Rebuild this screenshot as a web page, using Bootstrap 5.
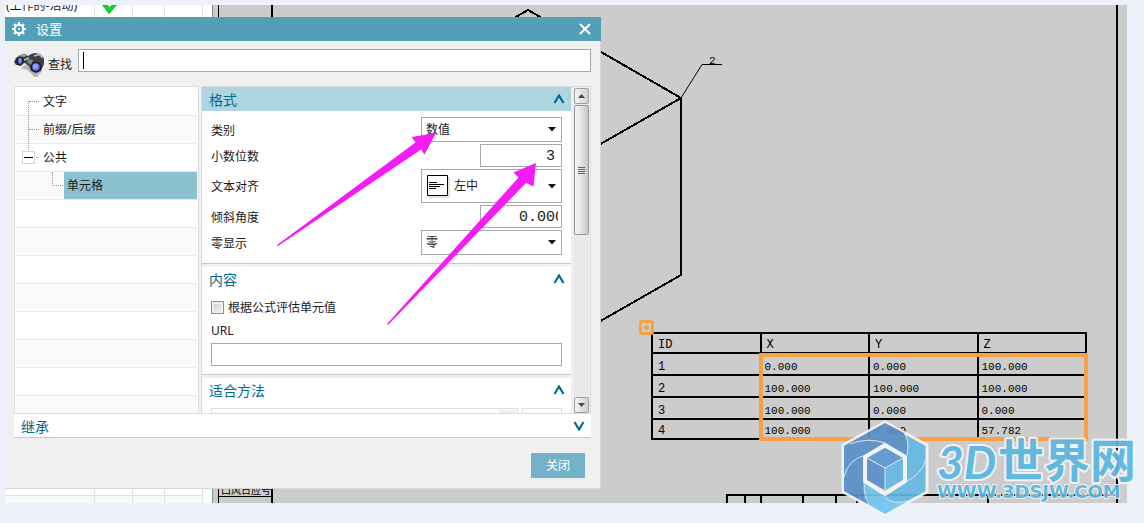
<!DOCTYPE html>
<html lang="zh-CN">
<head>
<meta charset="utf-8">
<meta name="viewport" content="width=device-width, initial-scale=1">
<title>设置</title>
<link href="https://cdn.jsdelivr.net/npm/bootstrap@5.3.0/dist/css/bootstrap.min.css" rel="stylesheet">
<style>
  body { background: #edf1fa; font: 12px/20px "Noto Sans", "Noto Sans CJK SC", sans-serif; color: #1a1a1a; }
  .workspace { height: 100vh; padding: 5px 17px 20px 5px; }
  .desk { background: #ccc; }

  /* part navigator behind the dialog */
  .navigator { width: 208px; background: #fff; border-right: 1px solid #868a8e; }
  .nav-grid { display: grid; grid-template-columns: 90px 38px 32px 38px; width: 198px; height: 8px; background: #f9f9f9; border-top: 1px solid #e6e6e6; }
  .nav-grid.top-row { height: 12px; background: #fff; border-top: 0; }
  .nav-grid > div { border-right: 1px solid #e0e0e0; overflow: hidden; white-space: nowrap; }
  .nav-grid.plain { background: #fff; border-top: 0; height: 7px; }
  .nav-grid svg { display: block; }
  .row-name { line-height: 20px; margin-top: -9px; padding-left: 1px; }

  /* drawing sheet */
  .sheet { min-width: 0; overflow: hidden; }
  .sheet svg { display: block; }
  .point-table { position: absolute; left: 438px; top: 327px; width: 436px; border-collapse: collapse; table-layout: fixed; font: 11px/12px "Liberation Mono", monospace; color: #000; }
  .point-table th, .point-table td { border: 2px solid #000; padding: 5px 0 0 5px; height: 22px; font-weight: 400; }
  .point-table td { padding-left: 3px; }
  .point-table th { font-size: 12px; }
  .point-table tr:last-child > * { height: 20px; padding-top: 3px; }
  .picked { position: absolute; left: 546px; top: 348px; width: 329px; height: 88px; border: 4px solid #f9a044; }
  .grip { position: absolute; left: 426px; top: 315px; width: 15px; height: 15px; border: 3px solid #f9a044; border-radius: 3px; }
  .grip::after { content: ""; position: absolute; left: 2px; top: 2px; width: 5px; height: 5px; border-radius: 2px; background: #f9a044; }

  /* dialog */
  .dialog-box { position: absolute; left: 5px; top: 17px; width: 596px; background: #f0f0f0; border: solid #d6d6d6; border-width: 0 1px 1px 0; }
  .dialog-box label { line-height: 18px; padding-top: 2px; }
  .title-bar { height: 24px; margin-right: -1px; padding: 0 10px 0 7px; gap: 10px; background: #549fb8; color: #fff; font-size: 13px; }
  .title-bar button, .fold { padding: 0; border: 0; background: none; line-height: 0; }
  .dialog-main { padding: 8px 9px 10px; }
  .search-row { height: 23px; margin-bottom: 14px; }
  .search-row label { width: 30px; margin-top: 5px; }
  .field { border: 1px solid #a9a9a9; border-radius: 0; background-color: #fff; height: 23px; padding: 0 4px; font: inherit; color: #1a1a1a; outline: 0; }
  .find-box { background: #fff linear-gradient(#000, #000) no-repeat 4px 2px / 1px 17px; caret-color: transparent; padding-left: 6px; }
  .num { width: 82px; font: 15px/20px "Liberation Mono", monospace; text-align: right; padding: 2px 6px 0 4px; }
  .num.angle { text-align: left; padding: 2px 3px 0 38px; }
  .pick { width: 141px; height: 25px; appearance: none; background: #fff url("data:image/svg+xml,%3Csvg xmlns='http://www.w3.org/2000/svg' width='8' height='5'%3E%3Cpath d='M0 0h8L4 4.5z' fill='%23111'/%3E%3C/svg%3E") no-repeat right 5px center; }
  .pick.tall { height: 34px; padding-left: 32px; }
  .pick-icon { left: 5px; top: 5px; }
  .panes { height: 328px; gap: 2px; }
  .tree { width: 185px; background: #fff; border: 1px solid #dcdcdc; padding: 1px; overflow: hidden; }
  .tree li { height: 28px; border-bottom: 1px solid #eaeaea; display: flex; align-items: center; padding-left: 27px; position: relative; }
  .tree li:nth-child(even) { background: #fafafa; }
  .tree .chosen { margin-left: 21px; padding-left: 3px; flex: 1; align-self: stretch; background: #8bc1d0; display: flex; align-items: center; }
  .twig { position: absolute; z-index: 1; border: 0 dotted #999; }
  .twig.h { left: 13px; top: 13px; width: 10px; border-top-width: 1px; }
  .twig.v { left: 12px; top: 13px; height: 49px; border-left-width: 1px; }
  .twig.sub { left: 36px; top: 0; width: 11px; height: 14px; border-width: 0 0 1px 1px; }
  .knob { position: absolute; z-index: 1; left: 6px; top: 7px; width: 13px; height: 13px; border: 1px solid #d4d4d4; background: #fff; }
  .knob::after { content: ""; position: absolute; left: 1px; top: 5px; width: 9px; height: 1px; background: #000; }
  .options { border: 1px solid #dcdcdc; min-width: 0; overflow: hidden; }
  .sections { overflow: hidden; min-width: 0; }
  .group { background: #fff; border-bottom: 1px solid #c9c9c9; margin-bottom: 3px; }
  .group-head { height: 24px; padding: 0 6px 0 7px; font-size: 14px; line-height: 24px; color: #046a8c; margin: 0; font-weight: 400; }
  .group-head span { line-height: 22px; padding-top: 2px; }
  .group-head.on { background: #afd6e0; }
  .group-body { padding: 6px 9px 8px; }
  .faded { border-color: #dcdcdc; }
  .tick { appearance: none; width: 13px; height: 13px; margin: 0; border: 1px solid #8e8f8f; background: linear-gradient(135deg, #c4c9cf, #f6f6f6); box-shadow: inset 0 0 0 2px #f0f0f0; }
  .bar { width: 15px; margin: 1px 1px 0 3px; background: #e9e9e9; }
  .bar-end { height: 16px; border: 1px solid #a0a0a0; border-radius: 2px; background: linear-gradient(90deg, #f4f4f4, #d0d0d0); padding: 0; line-height: 0; }
  .bar-end svg { display: block; margin: auto; }
  .thumb { height: 130px; margin-top: 1px; border: 1px solid #989898; border-radius: 2px; background: linear-gradient(90deg, #f4f4f4, #e4e4e4 50%, #c4c4c4); }
  .inherit { background: #fff; border-bottom: 1px solid #c9c9c9; }
  .close-btn { width: 54px; height: 25px; margin: 15px 6px 0 0; padding: 0; border: 0; border-radius: 0; background: #73b2c8; color: #fff; font-size: 12px; }
  .arrows { position: absolute; left: 0; top: 0; pointer-events: none; }
  .watermark { position: absolute; right: 0; bottom: 0; pointer-events: none; }
</style>
</head>
<body>
<main class="workspace position-relative overflow-hidden">
  <div class="desk d-flex h-100 overflow-hidden">
    <section class="navigator flex-shrink-0 d-flex flex-column justify-content-between">
      <div class="nav-grid top-row">
        <div class="row-name">(工作的-活动)</div>
        <div><svg width="37" height="12"><path d="M7.500 0h5l2 2.500L17 0h4.500L14 8.800z" fill="#12d422" stroke="#0d9a2c" stroke-width=".6"/></svg></div><div></div><div></div>
      </div>
      <div>
        <div class="nav-grid plain"><div></div><div></div><div></div><div></div></div>
        <div class="nav-grid"><div></div><div></div><div></div><div></div></div>
      </div>
    </section>

    <section class="sheet flex-grow-1 position-relative">
      <svg width="914" height="498" viewBox="213 5 914 498" fill="none" stroke="#000" stroke-width="2">
        <path d="M218.500 5V503M218 496.500H272" stroke-width="1"/>
        <path d="M272 5V503M1117 5V503"/>
        <path d="M500 26L528 10L681 98V275L590 327M681 98L590 150" shape-rendering="crispEdges"/>
        <path d="M681 98L702 64.500H722" stroke-width="1"/>
        <path d="M727 503V495H1117M745 495V503M761 495V503M803 495V503M836 495V503M857 495V503M988 495V503"/>
        <text x="709" y="64" font-family="Liberation Mono, monospace" font-size="11" fill="#000" stroke="none">2</text>
        <text x="221" y="494" font-family="Noto Sans CJK SC, sans-serif" font-size="10" fill="#000" stroke="none">口风日应号</text>
      </svg>
      <table class="point-table">
        <thead><tr><th>ID</th><th>X</th><th>Y</th><th>Z</th></tr></thead>
        <tbody>
          <tr><th>1</th><td>0.000</td><td>0.000</td><td>100.000</td></tr>
          <tr><th>2</th><td>100.000</td><td>100.000</td><td>100.000</td></tr>
          <tr><th>3</th><td>100.000</td><td>0.000</td><td>0.000</td></tr>
          <tr><th>4</th><td>100.000</td><td>0.000</td><td>57.782</td></tr>
        </tbody>
      </table>
      <div class="picked"></div>
      <div class="grip"></div>
    </section>
  </div>

  <section class="dialog-box">
    <header class="title-bar d-flex align-items-center">
      <svg width="14" height="14" viewBox="-7 -7 14 14" fill="none" stroke="#fff"><circle r="4.300" stroke-width="2"/><circle r="1" fill="#fff" stroke="none"/><path stroke-width="2.200" d="M0-7v2M0 7v-2M-7 0h2M7 0h-2M-5-5l1.400 1.400M5 5L3.600 3.600M-5 5l1.400-1.400M5-5L3.600-3.600"/></svg>
      <span class="flex-grow-1">设置</span>
      <button type="button" aria-label="关闭窗口"><svg width="12" height="12" fill="none" stroke="#fff" stroke-width="2"><path d="M1 1l10 10M11 1L1 11"/></svg></button>
    </header>
    <div class="dialog-main">
      <div class="search-row d-flex">
        <svg class="flex-shrink-0" width="34" height="30" viewBox="14 49 34 30">
          <path d="M21 68l6 2 4 3 3 4 3 0 5-6-6-6-8-2z" fill="#b4b4b4"/>
          <path d="M16 58l4-3 5-1 3 2 3-2 4-1 5 1 4 4 0 6-3 7-5 2-5-2-2-5-4-3-3 1-2 1-4 0-2-3z" fill="#3c4046"/>
          <path d="M18 56.500l8-1M34 56l5-1.500 4 3.500M24 60l5-2" stroke="#b9b9b9" stroke-width="1.600" fill="none"/>
          <path d="M28 59l5 1-2 5-4-3z" fill="#80848a"/>
          <ellipse cx="20" cy="61" rx="3" ry="4.200" fill="#3d50bd" stroke="#15151f" stroke-width="1.300"/>
          <ellipse cx="20" cy="60.500" rx="1.500" ry="2.400" fill="#8798ea"/>
          <circle cx="36" cy="67" r="4.600" fill="#4a5dcb" stroke="#15151f" stroke-width="1.300"/>
          <ellipse cx="35.500" cy="66.500" rx="2.700" ry="2.900" fill="#8da0f4"/>
        </svg>
        <label for="find">查找</label>
        <input id="find" class="field find-box flex-grow-1" type="text" autofocus>
      </div>

      <div class="panes d-flex">
        <ul class="tree list-unstyled m-0 flex-shrink-0">
          <li><i class="twig h"></i><i class="twig v"></i>文字</li>
          <li><i class="twig h"></i>前缀/后缀</li>
          <li><i class="twig h"></i><i class="knob"></i>公共</li>
          <li><i class="twig sub"></i><span class="chosen">单元格</span></li>
          <li></li><li></li><li></li><li></li><li></li><li></li><li></li><li></li>
        </ul>
        <div class="options d-flex flex-grow-1">
          <div class="sections flex-grow-1">
            <section class="group">
              <h2 class="group-head on d-flex align-items-center justify-content-between"><span>格式</span>
                <button class="fold" type="button" aria-label="折叠格式"><svg width="12" height="10" fill="none" stroke="#046a8c" stroke-width="2.200"><path d="M1.500 9L6 1.500 10.500 9"/></svg></button></h2>
              <div class="group-body d-grid" style="gap:2px">
                <div class="d-flex align-items-center justify-content-between"><label for="kind">类别</label><select id="kind" class="field pick"><option>数值</option></select></div>
                <div class="d-flex align-items-center justify-content-between"><label for="digits">小数位数</label><input id="digits" class="field num" value="3"></div>
                <div class="d-flex align-items-center justify-content-between"><label for="align">文本对齐</label>
                  <div class="position-relative d-flex"><select id="align" class="field pick tall"><option>左中</option></select>
                    <svg class="pick-icon position-absolute" width="24" height="24" fill="none"><path d="M3 23h20V3" stroke="#c8c8c8"/><path d="M1.500 1.500h20v20h-20z" fill="#fff" stroke="#000"/><path d="M3 8.500h8M3 10.500h15M3 12.500h11M3 14.500h7" stroke="#000"/></svg></div></div>
                <div class="d-flex align-items-center justify-content-between"><label for="angle">倾斜角度</label><input id="angle" class="field num angle" value="0.0000"></div>
                <div class="d-flex align-items-center justify-content-between"><label for="zero">零显示</label><select id="zero" class="field pick"><option>零</option></select></div>
              </div>
            </section>
            <section class="group">
              <h2 class="group-head d-flex align-items-center justify-content-between"><span>内容</span>
                <button class="fold" type="button" aria-label="折叠内容"><svg width="12" height="10" fill="none" stroke="#046a8c" stroke-width="2.200"><path d="M1.500 9L6 1.500 10.500 9"/></svg></button></h2>
              <div class="group-body d-grid" style="gap:3px">
                <div class="d-flex align-items-center"><input id="formula" class="tick" type="checkbox"><label for="formula" class="ms-1">根据公式评估单元值</label></div>
                <label for="url">URL</label>
                <input id="url" class="field w-100" type="text">
              </div>
            </section>
            <section class="group">
              <h2 class="group-head d-flex align-items-center justify-content-between"><span>适合方法</span>
                <button class="fold" type="button" aria-label="折叠适合方法"><svg width="12" height="10" fill="none" stroke="#046a8c" stroke-width="2.200"><path d="M1.500 9L6 1.500 10.500 9"/></svg></button></h2>
              <div class="group-body d-flex gap-1"><div class="field faded flex-grow-1 d-flex justify-content-end p-0"><span style="width:17px;margin:1px 1px 0 0;background:#eee"></span></div><div class="field faded" style="width:40px"></div></div>
            </section>
          </div>
          <div class="bar d-flex flex-column flex-shrink-0">
            <button class="bar-end" type="button" aria-label="向上"><svg width="7" height="4"><path d="M0 4l3.500-4L7 4z" fill="#444"/></svg></button>
            <div class="thumb d-flex align-items-center justify-content-center"><svg width="7" height="9"><path d="M0 1.500h7M0 3.500h7M0 5.500h7M0 7.500h7" stroke="#666"/></svg></div>
            <button class="bar-end mt-auto" type="button" aria-label="向下"><svg width="7" height="4"><path d="M0 0l3.500 4L7 0z" fill="#444"/></svg></button>
          </div>
        </div>
      </div>

      <h2 class="group-head inherit d-flex align-items-center justify-content-between"><span>继承</span>
        <button class="fold" type="button" aria-label="展开继承"><svg width="12" height="10" fill="none" stroke="#046a8c" stroke-width="2.200"><path d="M1.500 1L6 8.500 10.500 1"/></svg></button></h2>
      <div class="d-flex justify-content-end"><button class="close-btn btn" type="button">关闭</button></div>
    </div>
  </section>

  <svg class="arrows" width="601" height="489" fill="#f41cf4">
    <path d="M277 245L415.500 142.500 411.500 137 436 133 424.500 154.500 421 149.500 278 246z"/>
    <path d="M387 324L518.500 177.500 513.500 172.500 536 163 533.500 186.500 526 183 388 325z"/>
  </svg>

  <svg class="watermark" width="304" height="105" viewBox="840 418 304 105">
    <g opacity=".93" stroke-linejoin="round">
      <path d="M885 422L927 445V492L885 515L843 492V445Z" fill="#65b9e2" stroke="#f4f4f4" stroke-width="3"/>
      <path d="M885 423L904 433Q909 446 907 455L885 443L864 455V482Q864 504 875 508L844 491V446Z" fill="#5990c8"/>
      <path d="M864 482L885 496Q891 505 908 501L885 514L873 507Q863 498 864 482Z" fill="#70c6ef"/>
      <path d="M885 443Q868 437 850 444M907 455Q910 439 904 433M907 481Q922 474 926 459M885 497Q891 505 908 501M864 482Q863 504 875 509M866 455Q848 459 844 477" fill="none" stroke="#d9eaf5" stroke-width="1"/>
      <path d="M885 445L905 457V481L885 494L865 481V457Z" fill="#cfcfcf" stroke="#f6f6f6" stroke-width="4"/>
      <path d="M885 448L903 458L885 468L867 458Z" fill="#5e99d0"/>
      <path d="M867 458L885 468V490L867 480Z" fill="#5990c8"/>
      <path d="M903 458L885 468V490L903 480Z" fill="#65b9e2"/>
      <path d="M867 458L885 468L903 458M885 468V490" fill="none" stroke="#e4eef6" stroke-width="1"/>
      <g fill="#5cb7e2" stroke="#f4f6f8" stroke-width="4" paint-order="stroke" font-weight="700">
        <text x="937" y="479" font-family="Lato, sans-serif" font-size="46" font-style="italic">3D</text>
        <text x="998" y="477" font-family="Noto Sans CJK SC, sans-serif" font-size="46">世界网</text>
        <text x="937" y="498" font-family="DejaVu Sans, sans-serif" font-size="18" stroke-width="2">WWW.3DSJW.COM</text>
      </g>
    </g>
  </svg>
</main>
<script src="https://cdn.jsdelivr.net/npm/bootstrap@5.3.0/dist/js/bootstrap.bundle.min.js"></script>
</body>
</html>
